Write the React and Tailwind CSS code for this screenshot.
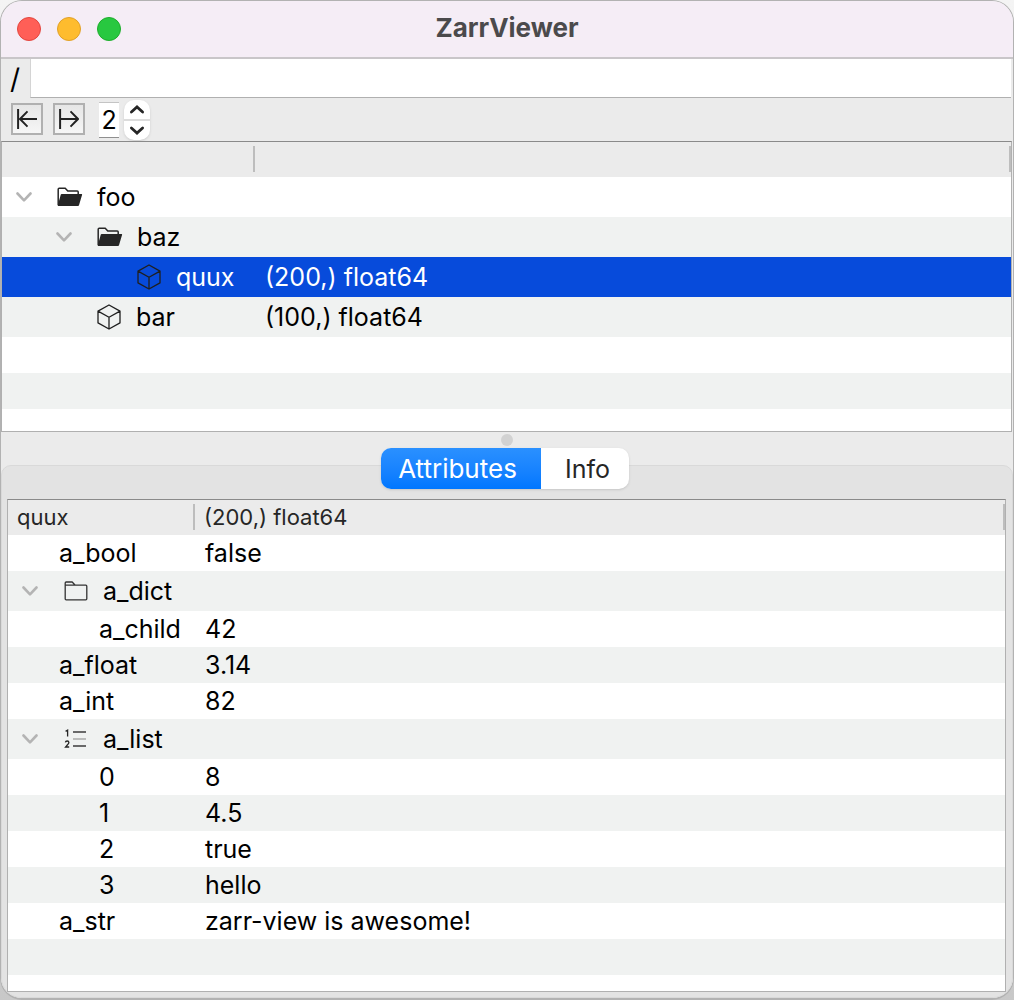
import React, { useState } from "react";

function ChevronDown() {
  return (
    <svg width="16" height="10" viewBox="0 0 16 10" fill="none" stroke="#b4b4b4" strokeWidth="2.6" strokeLinecap="round" strokeLinejoin="round">
      <path d="M1.5 1.5 8 8.3 14.5 1.5" />
    </svg>
  );
}

function OpenFolderIcon() {
  return (
    <svg width="26" height="20" viewBox="0 0 26 20" fill="none">
      <path d="M1.2 18V2.2Q1.2 1.2 2.2 1.2H8.2L10.8 4H20.2Q21.2 4 21.2 5V7.5" stroke="#262626" strokeWidth="1.5" />
      <path d="M4.6 7H24.6Q25.3 7 25.1 7.7L22 18.2Q21.7 19 21 19H1Q.6 19 .8 18.3L3.8 7.6Q4 7 4.6 7Z" fill="#262626" />
    </svg>
  );
}

function FolderIcon() {
  return (
    <svg width="24" height="20" viewBox="0 0 24 20" fill="none" stroke="#333333" strokeWidth="1.3" strokeLinejoin="round">
      <path d="M1.2 18.2V2Q1.2 1 2.2 1H8.2L11.2 4.2H21.8Q22.8 4.2 22.8 5.2V17.8Q22.8 18.8 21.8 18.8H2.2Q1.2 18.8 1.2 17.8M1.2 4.2H11.2" />
    </svg>
  );
}

function CubeIcon() {
  return (
    <svg width="24" height="26" viewBox="0 0 24 26" fill="none" stroke="#1f1f1f" strokeWidth="1.3" strokeLinejoin="round">
      <path d="M12 1 23 7.1V18.9L12 25 1 18.9V7.1ZM1 7.1 12 13.2 23 7.1M12 13.2V25" />
    </svg>
  );
}

function ListIcon() {
  return (
    <svg width="24" height="20" viewBox="0 0 24 20" fill="none">
      <path d="M9 3H22M9 17H22" stroke="#3c3c3c" strokeWidth="1.4" />
      <path d="M9 10H22" stroke="#9a9a9a" strokeWidth="1.2" />
      <path d="M1.6 2.4 3.6 1.2V7.4M1.4 13.4Q1.6 12 3.2 12T4.9 13.6Q4.9 14.5 3.5 15.8L1.6 18H5.2" stroke="#262626" strokeWidth="1.3" />
    </svg>
  );
}

function ArrowToBar({ flipped }) {
  return (
    <svg width="20" height="20" viewBox="0 0 20 20" fill="none" stroke="#222222" strokeWidth="2">
      {flipped ? (
        <path d="M1.1 0V20M1 10H19.5M11.5 2.4 19 10 11.5 17.6" />
      ) : (
        <path d="M1.1 0V20M20 10H2.5M10.5 2.4 3 10 10.5 17.6" />
      )}
    </svg>
  );
}

const icons = { open: OpenFolderIcon, folder: FolderIcon, cube: CubeIcon, list: ListIcon };

function TreeLabel({ row }) {
  const Icon = row.icon ? icons[row.icon] : null;
  return (
    <div className={`flex items-center ${row.pad}`}>
      {row.open && (
        <button type="button" aria-label={`Collapse ${row.name}`} className="flex w-4 shrink-0 items-center justify-center">
          <ChevronDown />
        </button>
      )}
      {Icon && (
        <span className={`flex w-[26px] shrink-0 justify-center ${row.open ? "ml-[25px]" : ""}`}>
          <Icon />
        </span>
      )}
      <span className={Icon ? "ml-[14px]" : ""}>{row.name}</span>
    </div>
  );
}

function TreeTable({ label, heads, rows, firstCol, valuePad, headPad }) {
  return (
    <table aria-label={label} className="w-full table-fixed border-separate border-spacing-0 border border-t-[#8a8a8a] border-x-[#b0b0b0] border-b-[#b0b0b0] bg-white">
      <colgroup>
        <col className={firstCol} />
        <col />
      </colgroup>
      <thead>
        <tr className="bg-[#ebebeb] text-[22px] leading-6 text-[#262626]">
          {heads.map((h, i) => (
            <th key={i} scope="col" className="h-[35px] p-0 pb-[2px] text-left font-normal">
              <div className={`flex h-[26px] items-center border-r-2 border-[#bdbdbd] ${headPad}`}>{h}</div>
            </th>
          ))}
        </tr>
      </thead>
      <tbody>
        {rows.map((row, i) => (
          <tr
            key={i}
            aria-selected={row.selected ? true : undefined}
            className={row.selected ? "bg-[#074bdb] text-white" : i % 2 ? "bg-[#f0f2f1]" : "bg-white"}
          >
            <td className={`p-0 ${row.h}`}>{row.name && <TreeLabel row={row} />}</td>
            <td className={`py-0 pr-0 ${valuePad}`}>{row.value}</td>
          </tr>
        ))}
      </tbody>
    </table>
  );
}

const nodes = [
  { name: "foo", icon: "open", open: true, pad: "pl-[14px]", h: "h-10" },
  { name: "baz", icon: "open", open: true, pad: "pl-[54px]", h: "h-10" },
  { name: "quux", icon: "cube", pad: "pl-[134px]", h: "h-10", value: "(200,) float64", selected: true },
  { name: "bar", icon: "cube", pad: "pl-[94px]", h: "h-10", value: "(100,) float64" },
  { h: "h-9" },
  { h: "h-9" },
  { h: "h-[22px]" },
];

const attributes = [
  { name: "a_bool", pad: "pl-[51px]", h: "h-9", value: "false" },
  { name: "a_dict", icon: "folder", open: true, pad: "pl-[14px]", h: "h-10" },
  { name: "a_child", pad: "pl-[91px]", h: "h-9", value: "42" },
  { name: "a_float", pad: "pl-[51px]", h: "h-9", value: "3.14" },
  { name: "a_int", pad: "pl-[51px]", h: "h-9", value: "82" },
  { name: "a_list", icon: "list", open: true, pad: "pl-[14px]", h: "h-10" },
  { name: "0", pad: "pl-[91px]", h: "h-9", value: "8" },
  { name: "1", pad: "pl-[91px]", h: "h-9", value: "4.5" },
  { name: "2", pad: "pl-[91px]", h: "h-9", value: "true" },
  { name: "3", pad: "pl-[91px]", h: "h-9", value: "hello" },
  { name: "a_str", pad: "pl-[51px]", h: "h-9", value: "zarr-view is awesome!" },
  { h: "h-9" },
  { h: "h-4" },
];

export default function App() {
  const [path, setPath] = useState("");
  const [depth, setDepth] = useState("2");
  return (
    <div className="min-h-screen bg-linear-to-b from-[#f4f4f4] to-[#c8c8c8] font-['Inter',sans-serif] text-[25px] leading-8 text-black">
      <div className="flex min-h-screen flex-col overflow-hidden rounded-[22px] border border-b-2 border-[#b2b2b2] bg-[#ebebeb]">
        <header className="grid h-[58px] grid-cols-[1fr_auto_1fr] items-center border-b-2 border-[#c9c6c9] bg-[#f5edf6] px-4">
          <div className="flex gap-4">
            <button type="button" aria-label="Close" className="size-6 rounded-full border border-[#e2463f] bg-[#ff5f57]" />
            <button type="button" aria-label="Minimize" className="size-6 rounded-full border border-[#e0a028] bg-[#febc2e]" />
            <button type="button" aria-label="Zoom" className="size-6 rounded-full border border-[#1dad2b] bg-[#28c840]" />
          </div>
          <h1 className="pb-[2px] text-[26px] font-bold text-[#4b4a4c]">ZarrViewer</h1>
        </header>

        <div className="flex h-[39px] pr-[2px]">
          <label htmlFor="path" className="flex w-[29px] shrink-0 items-center pl-[9px] text-[28px]">/</label>
          <input
            id="path"
            value={path}
            onChange={(e) => setPath(e.target.value)}
            className="min-w-0 flex-1 border-b border-l border-b-[#b0b0b0] border-l-[#d4d4d4] bg-white px-2 outline-none"
          />
        </div>

        <div className="flex h-[43px] items-center pl-[10px]">
          <div className="flex gap-[10px] pb-[2px]">
            <button type="button" aria-label="Collapse all" className="flex size-8 items-center justify-center border-2 border-[#b0b0b0] bg-linear-to-b from-[#e6e6e6] to-[#f6f6f6]">
              <ArrowToBar />
            </button>
            <button type="button" aria-label="Expand all" className="flex size-8 items-center justify-center border-2 border-[#b0b0b0] bg-linear-to-b from-[#e6e6e6] to-[#f6f6f6]">
              <ArrowToBar flipped />
            </button>
          </div>
          <input
            aria-label="Depth"
            value={depth}
            onChange={(e) => setDepth(e.target.value)}
            className="ml-[14px] h-9 w-5 border-y border-t-[#c4c4c4] border-b-[#8f8f8f] bg-white p-0 text-center outline-none"
          />
          <div className="ml-[5px] flex h-10 w-[26px] flex-col divide-y-2 divide-[#dcdcdc] overflow-hidden rounded-[10px] bg-white shadow">
            <button type="button" aria-label="Increase depth" className="flex flex-1 items-center justify-center">
              <svg width="16" height="9" viewBox="0 0 16 9" fill="none" stroke="#262626" strokeWidth="2.8" strokeLinecap="round"><path d="M2.4 7 8 2 13.6 7" /></svg>
            </button>
            <button type="button" aria-label="Decrease depth" className="flex flex-1 items-center justify-center">
              <svg width="16" height="9" viewBox="0 0 16 9" fill="none" stroke="#262626" strokeWidth="2.8" strokeLinecap="round"><path d="M2.4 2 8 7 13.6 2" /></svg>
            </button>
          </div>
        </div>

        <div className="pr-px">
          <TreeTable label="Hierarchy" heads={["", ""]} rows={nodes} firstCol="w-[253px]" valuePad="pl-[10px]" headPad="pl-2" />
        </div>

        <div className="flex h-4 items-center justify-center" role="separator">
          <span className="size-3 rounded-full bg-[#d2d2d2]" />
        </div>

        <div role="tablist" className="z-10 mr-[5px] flex h-[41px] self-center overflow-hidden rounded-[10px] bg-white shadow-sm">
          <button type="button" role="tab" aria-selected="true" className="w-40 bg-linear-to-b from-[#2a90ff] to-[#0077ff] pr-[6px] text-[26px] text-white">Attributes</button>
          <button type="button" role="tab" aria-selected="false" className="w-[88px] pl-[6px] text-[#262626]">Info</button>
        </div>

        <section className="-mt-6 flex-1 rounded-[10px] rounded-b-[20px] border border-[#d9d9d9] bg-[#e3e3e3] pt-[33px] pr-[6px] pb-[5px] pl-[5px]">
          <TreeTable label="Attributes" heads={["quux", "(200,) float64"]} rows={attributes} firstCol="w-[187px]" valuePad="pl-[10px]" headPad="pl-[9px]" />
        </section>
      </div>
    </div>
  );
}
